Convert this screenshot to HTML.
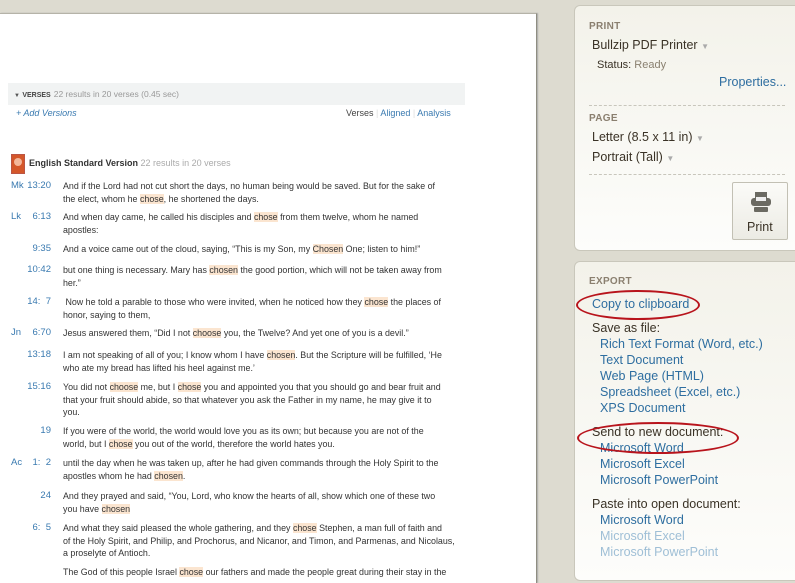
<!DOCTYPE html>
<html><head><meta charset="utf-8"><style>
*{margin:0;padding:0;box-sizing:border-box}
body{width:795px;height:570px;overflow:hidden;background:#dddbd0;font-family:"Liberation Sans",sans-serif;position:relative}
#page{position:absolute;left:0;top:13px;width:537px;height:570px;background:#fff;border-right:1px solid #8f8e82;border-top:1px solid #b5b3a8;box-shadow:1px 0 1px #aaa}
.abs{position:absolute;white-space:nowrap}
.vbar{position:absolute;left:8px;top:69px;width:457px;height:22px;background:#f1f3f3;font-size:8.5px;color:#999;padding:6px 0 0 6px}
.vbar b{color:#444;font-size:7px;margin-right:3px}
.blue{color:#3a7ab0}
.v{position:absolute;font-size:8.9px;line-height:12.5px;color:#333;white-space:nowrap}
.bk{position:absolute;left:11px;font-size:9.5px;color:#3a7ab0}
.ref{position:absolute;right:calc(795px - 51px);font-size:9.5px;color:#3a7ab0;text-align:right}
.v i{font-style:normal;background:#fbe5d0}
#p1,#p2{position:absolute;left:574px;width:230px;background:linear-gradient(#f3f2ea,#fdfdfb);border:1px solid #c9c7bb;border-radius:6px}
#p1{top:5px;height:246px}
#p2{top:261px;height:320px}
.h{position:absolute;left:14px;font-size:10px;color:#8a7f6f;font-weight:bold;letter-spacing:.3px}
.t{position:absolute;font-size:12.5px;color:#3a3226;white-space:nowrap}
.l{position:absolute;font-size:12.5px;color:#2e6ea0;white-space:nowrap}
.g{color:#9fbfd6}
.dash{position:absolute;left:14px;width:196px;border-top:1px dashed #c8c6bc}
.arr{color:#aaa;font-size:8px}
.oval{position:absolute;border:2px solid #b8141c;border-radius:50%}
</style></head><body>
<div id="page">
<div class="vbar"><span style="font-size:6px;color:#555">▼</span> <b>VERSES</b>22 results in 20 verses (0.45 sec)</div>
<div class="abs blue" style="left:16px;top:94px;font-size:9px;font-style:italic">+ Add Versions</div>
<div class="abs" style="left:346px;top:94px;font-size:9px;color:#444">Verses <span style="color:#ddd">|</span> <span class="blue">Aligned</span> <span style="color:#ddd">|</span> <span class="blue">Analysis</span></div>
<div class="abs" style="left:11px;top:140px;width:14px;height:20px;background:#d4572a;border:1px solid #b54"><div style="width:8px;height:8px;border-radius:50%;background:#f3b79a;margin:3px auto 0"></div></div>
<div class="abs" style="left:29px;top:144px;font-size:9px;color:#333"><b>English Standard Version</b> <span style="color:#aaa">22 results in 20 verses</span></div>
</div>

<div class="bk" style="top:180px">Mk</div><div class="ref" style="top:180px">13:20</div>
<div class="v" style="left:63px;top:180px">And if the Lord had not cut short the days, no human being would be saved. But for the sake of<br>the elect, whom he <i>chose</i>, he shortened the days.</div>
<div class="bk" style="top:211px">Lk</div><div class="ref" style="top:211px">6:13</div>
<div class="v" style="left:63px;top:211px">And when day came, he called his disciples and <i>chose</i> from them twelve, whom he named<br>apostles:</div>
<div class="ref" style="top:243px">9:35</div>
<div class="v" style="left:63px;top:243px">And a voice came out of the cloud, saying, “This is my Son, my <i>Chosen</i> One; listen to him!”</div>
<div class="ref" style="top:264px">10:42</div>
<div class="v" style="left:63px;top:264px">but one thing is necessary. Mary has <i>chosen</i> the good portion, which will not be taken away from<br>her.”</div>
<div class="ref" style="top:296px">14:&nbsp; 7</div>
<div class="v" style="left:63px;top:296px">&nbsp;Now he told a parable to those who were invited, when he noticed how they <i>chose</i> the places of<br>honor, saying to them,</div>
<div class="bk" style="top:327px">Jn</div><div class="ref" style="top:327px">6:70</div>
<div class="v" style="left:63px;top:327px">Jesus answered them, “Did I not <i>choose</i> you, the Twelve? And yet one of you is a devil.”</div>
<div class="ref" style="top:349px">13:18</div>
<div class="v" style="left:63px;top:349px">I am not speaking of all of you; I know whom I have <i>chosen</i>. But the Scripture will be fulfilled, ‘He<br>who ate my bread has lifted his heel against me.’</div>
<div class="ref" style="top:381px">15:16</div>
<div class="v" style="left:63px;top:381px">You did not <i>choose</i> me, but I <i>chose</i> you and appointed you that you should go and bear fruit and<br>that your fruit should abide, so that whatever you ask the Father in my name, he may give it to<br>you.</div>
<div class="ref" style="top:425px">19</div>
<div class="v" style="left:63px;top:425px">If you were of the world, the world would love you as its own; but because you are not of the<br>world, but I <i>chose</i> you out of the world, therefore the world hates you.</div>
<div class="bk" style="top:457px">Ac</div><div class="ref" style="top:457px">1:&nbsp; 2</div>
<div class="v" style="left:63px;top:457px">until the day when he was taken up, after he had given commands through the Holy Spirit to the<br>apostles whom he had <i>chosen</i>.</div>
<div class="ref" style="top:490px">24</div>
<div class="v" style="left:63px;top:490px">And they prayed and said, “You, Lord, who know the hearts of all, show which one of these two<br>you have <i>chosen</i></div>
<div class="ref" style="top:522px">6:&nbsp; 5</div>
<div class="v" style="left:63px;top:522px">And what they said pleased the whole gathering, and they <i>chose</i> Stephen, a man full of faith and<br>of the Holy Spirit, and Philip, and Prochorus, and Nicanor, and Timon, and Parmenas, and Nicolaus,<br>a proselyte of Antioch.</div>
<div class="v" style="left:63px;top:566px">The God of this people Israel <i>chose</i> our fathers and made the people great during their stay in the</div>

<div id="p1">
<div class="h" style="top:15px">PRINT</div>
<div class="t" style="left:17px;top:32px">Bullzip PDF Printer <span class="arr">▼</span></div>
<div class="t" style="left:22px;top:53px;font-size:11px">Status: <span style="color:#8a8070">Ready</span></div>
<div class="l" style="left:144px;top:69px">Properties...</div>
<div class="dash" style="top:99px"></div>
<div class="h" style="top:107px">PAGE</div>
<div class="t" style="left:17px;top:124px">Letter (8.5 x 11 in) <span class="arr">▼</span></div>
<div class="t" style="left:17px;top:144px">Portrait (Tall) <span class="arr">▼</span></div>
<div class="dash" style="top:168px"></div>
<div style="position:absolute;left:157px;top:176px;width:56px;height:58px;border:1px solid #c2c0b4;border-radius:2px;background:linear-gradient(#fbfbf8,#ecebe4)">
<svg width="22" height="22" viewBox="0 0 22 22" style="position:absolute;left:17px;top:8px"><rect x="5" y="1" width="12" height="6" fill="#6b6a62"/><rect x="1" y="7" width="20" height="8" rx="3" fill="#6b6a62"/><rect x="6" y="6" width="10" height="4" fill="#eee"/><rect x="4" y="16" width="14" height="5" rx="1" fill="#6b6a62"/></svg>
<div class="t" style="left:14px;top:37px">Print</div>
</div>
</div>

<div id="p2">
<div class="h" style="top:14px">EXPORT</div>
<div class="l" style="left:17px;top:35px">Copy to clipboard</div>
<div class="t" style="left:17px;top:59px">Save as file:</div>
<div class="l" style="left:25px;top:75px">Rich Text Format (Word, etc.)</div>
<div class="l" style="left:25px;top:91px">Text Document</div>
<div class="l" style="left:25px;top:107px">Web Page (HTML)</div>
<div class="l" style="left:25px;top:123px">Spreadsheet (Excel, etc.)</div>
<div class="l" style="left:25px;top:139px">XPS Document</div>
<div class="t" style="left:17px;top:163px">Send to new document:</div>
<div class="l" style="left:25px;top:179px">Microsoft Word</div>
<div class="l" style="left:25px;top:195px">Microsoft Excel</div>
<div class="l" style="left:25px;top:211px">Microsoft PowerPoint</div>
<div class="t" style="left:17px;top:235px">Paste into open document:</div>
<div class="l" style="left:25px;top:251px">Microsoft Word</div>
<div class="l g" style="left:25px;top:267px">Microsoft Excel</div>
<div class="l g" style="left:25px;top:283px">Microsoft PowerPoint</div>
</div>
<div class="oval" style="left:576px;top:290px;width:124px;height:30px"></div>
<div class="oval" style="left:577px;top:422px;width:162px;height:32px"></div>
</body></html>
